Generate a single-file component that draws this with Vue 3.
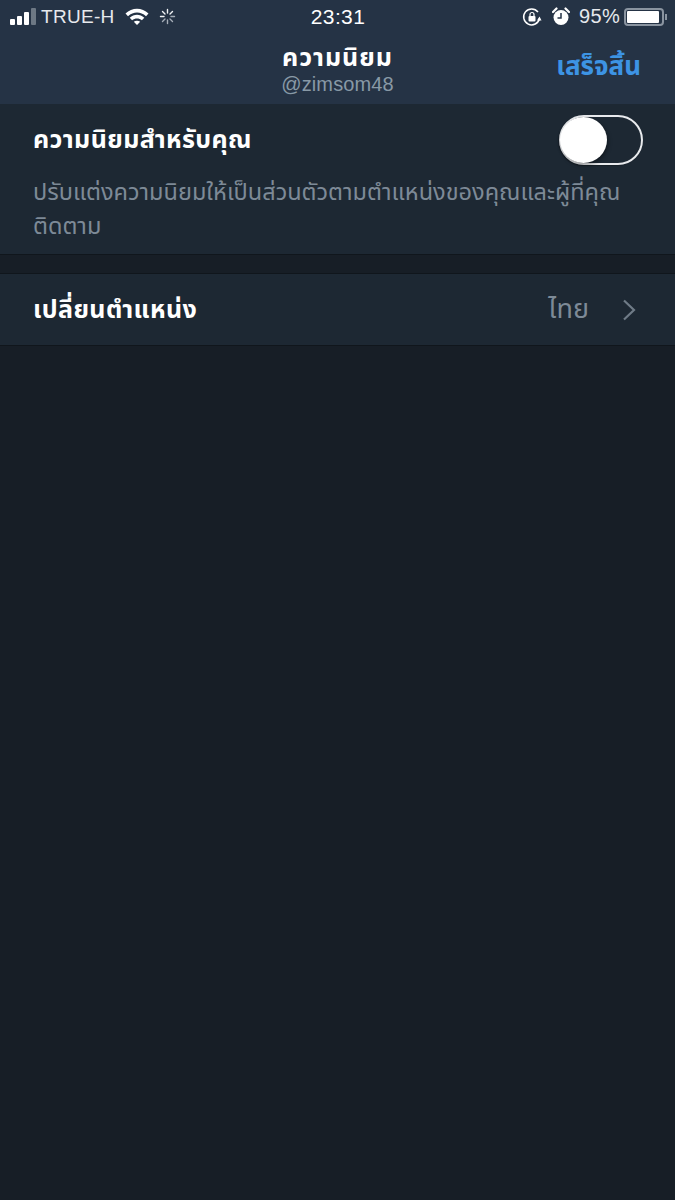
<template>
  <div class="screen">
    <header class="topbar">
      <div class="status">
        <div class="status-left">
          <span class="signal"><i></i><i></i><i></i><i class="off"></i></span>
          <span class="carrier">TRUE-H</span>
          <svg class="wifi" width="24" height="17" viewBox="0 0 24 17">
            <path d="M0.500 5.600C7 -1 17 -1 23.500 5.600L21 8.200C15.700 3.200 8.300 3.200 3 8.200Z" fill="#fff" />
            <path d="M4.700 9.800C9 5.800 15 5.800 19.300 9.800L16.900 12.300C14 9.800 10 9.800 7.100 12.300Z" fill="#fff" />
            <path d="M8.800 13.800C10.700 12.300 13.300 12.300 15.200 13.800L12 17Z" fill="#fff" />
          </svg>
          <svg class="spinner" width="17" height="17" viewBox="0 0 17 17" stroke-width="1.4" stroke-linecap="round">
            <path stroke="#f0f2f4" d="M8.500 1.500V5M3.500 3.500L6 6M11 6L13.500 3.500M1.500 8.500H5" />
            <path stroke="#a5adb7" d="M8.500 12V15.500M12 8.500H15.500M11 11L13.500 13.500M3.500 13.500L6 11" />
          </svg>
        </div>
        <div class="clock">23:31</div>
        <div class="status-right">
          <svg class="lock" width="20" height="20" viewBox="0 0 20 20" fill="none">
            <path d="M17.500 11.500A8 8 0 1 1 16 5" stroke="#fff" stroke-width="1.500" />
            <path d="M17.500 9.500L15 13.500H19.500Z" fill="#fff" />
            <rect x="6.500" y="9" width="7" height="5.500" rx="1" fill="#fff" />
            <path d="M8 9V7.500A2 2 0 0 1 12 7.500V9" stroke="#fff" stroke-width="1.200" />
          </svg>
          <svg class="alarm" width="18" height="19" viewBox="0 0 18 19">
            <circle cx="9" cy="10.500" r="7.500" fill="#fff" />
            <path d="M9 6V11H5.500" stroke="#253345" stroke-width="1.500" fill="none" />
            <path d="M1 5L4.500 1.500M17 5L13.500 1.500" stroke="#fff" stroke-width="2.200" stroke-linecap="round" />
          </svg>
          <span class="percent">95%</span>
          <span class="battery"><i></i></span>
        </div>
      </div>
      <div class="nav">
        <div class="nav-title">
          <div class="title">ความนิยม</div>
          <div class="handle">@zimsom48</div>
        </div>
        <div class="done">เสร็จสิ้น</div>
      </div>
    </header>

    <section class="group">
      <div class="row-head">
        <span class="label">ความนิยมสำหรับคุณ</span>
        <span class="switch"><i></i></span>
      </div>
      <p class="hint">ปรับแต่งความนิยมให้เป็นส่วนตัวตามตำแหน่งของคุณและผู้ที่คุณติดตาม</p>
    </section>

    <section class="group location">
      <span class="label">เปลี่ยนตำแหน่ง</span>
      <span class="value">ไทย</span>
      <svg class="chevron" width="14" height="22" viewBox="0 0 14 22" fill="none">
        <path d="M2 1.500L12 11L2 20.500" stroke="#6f7b87" stroke-width="2.200" />
      </svg>
    </section>
  </div>
</template>

<script setup>
</script>

<style>
html, body {
  margin: 0;
  background: #171e26;
}
</style>

<style scoped>
.screen {
  height: 1200px;
  overflow: hidden;
  background: #171e26;
  font-family: "Noto Sans Thai", "Noto Sans", "Liberation Sans", "DejaVu Sans", sans-serif;
  color: #fff;
}
.topbar {
  height: 104px;
  background: #253345;
}
.status {
  height: 33px;
  display: flex;
  align-items: center;
  justify-content: space-between;
  position: relative;
  padding: 0 9px 0 10px;
  font-family: "Liberation Sans", sans-serif;
  font-size: 19px;
}
.status-left, .status-right {
  display: flex;
  align-items: center;
}
.signal {
  display: flex;
  align-items: flex-end;
  gap: 2px;
  height: 17px;
}
.signal i {
  width: 5px;
  border-radius: 1px;
  background: #fff;
}
.signal i:nth-child(1) { height: 6px; }
.signal i:nth-child(2) { height: 9px; }
.signal i:nth-child(3) { height: 13px; }
.signal i:nth-child(4) { height: 17px; }
.signal i.off { background: #6d7884; }
.carrier {
  margin-left: 5px;
  color: #e6e9ed;
  letter-spacing: 0.3px;
}
.wifi { margin-left: 10px; }
.spinner { margin-left: 10px; }
.clock {
  position: absolute;
  left: 1px;
  right: 0;
  text-align: center;
  font-size: 21px;
  letter-spacing: 0.4px;
  pointer-events: none;
}
.lock { margin-right: 10px; }
.alarm { margin-right: 9px; }
.percent {
  color: #e6e9ed;
  font-size: 20px;
  letter-spacing: 0.3px;
}
.battery {
  width: 40px;
  height: 18px;
  margin-left: 4px;
  margin-right: 2px;
  box-sizing: border-box;
  border: 2px solid #8a94a0;
  border-radius: 4px;
  padding: 1px;
  position: relative;
}
.battery i {
  display: block;
  width: 94%;
  height: 100%;
  background: #fff;
  border-radius: 1px;
}
.battery::after {
  content: "";
  position: absolute;
  right: -5px;
  top: 4px;
  width: 2px;
  height: 6px;
  background: #8a94a0;
}
.nav {
  height: 71px;
  display: flex;
  justify-content: center;
  position: relative;
}
.nav-title {
  text-align: center;
}
.title {
  font-size: 25px;
  font-weight: 700;
  letter-spacing: 1px;
  line-height: 30px;
  margin-top: 10px;
}
.handle {
  font-family: "Liberation Sans", sans-serif;
  font-size: 20px;
  letter-spacing: 0.1px;
  line-height: 22px;
  color: #8899a6;
}
.done {
  position: absolute;
  right: 34px;
  top: 16px;
  font-size: 26px;
  font-weight: 700;
  line-height: 36px;
  color: #3d94e4;
}
.group {
  background: #1d2833;
  border-bottom: 1px solid #10161c;
}
.row-head {
  display: flex;
  align-items: center;
  justify-content: space-between;
  padding: 11px 33px 0;
  height: 50px;
}
.label {
  font-size: 25px;
  font-weight: 700;
  letter-spacing: 0.4px;
}
.switch {
  width: 84px;
  height: 50px;
  box-sizing: border-box;
  border: 2px solid #e8eaed;
  border-radius: 25px;
  position: relative;
  margin-right: -1px;
  box-shadow: -1px 1px 1px rgba(0, 0, 0, 0.25);
}
.switch i {
  position: absolute;
  left: -1px;
  top: 0;
  width: 47px;
  height: 46px;
  border-radius: 50%;
  background: #fff;
  box-shadow: 1px 2px 4px rgba(0, 0, 0, 0.4);
}
.hint {
  margin: 0;
  padding: 11px 50px 10px 33px;
  font-size: 23.500px;
  line-height: 34px;
  color: #7d8a97;
}
.location {
  margin-top: 18px;
  height: 71px;
  display: flex;
  align-items: center;
  padding: 0 39px 0 33px;
  border-top: 1px solid #10161c;
}
.value {
  margin-left: auto;
  font-size: 27px;
  color: #7d8a97;
}
.chevron {
  margin-left: 33px;
}
</style>
